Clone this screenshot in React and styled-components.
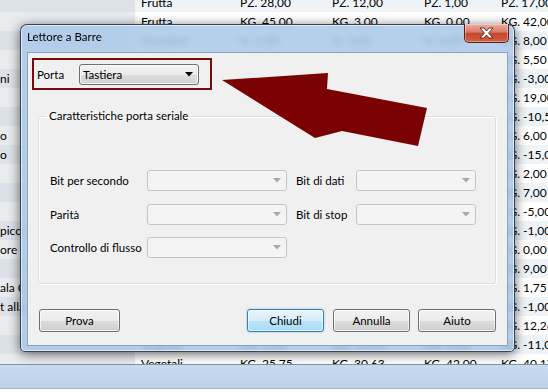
import React from "react";
import styled, { createGlobalStyle } from "styled-components";

const GlobalStyle = createGlobalStyle`
  html, body { margin: 0; padding: 0; }
  body {
    width: 548px;
    height: 392px;
    overflow: hidden;
    background: #ffffff;
    font-family: "Segoe UI", Lato, "Liberation Sans", sans-serif;
    font-size: 12px;
    color: #000;
  }
`;

const sheetRows = [
  { lead: "", cells: ["Frutta", "PZ. 28,00", "PZ. 12,00", "PZ. 1,00", "PZ. 17,00"] },
  { lead: "", cells: ["Frutta", "KG. 45,00", "KG. 3,00", "KG. 0,00", "KG. 42,00"] },
  { lead: "", cells: ["Standard", "N. 5,00", "N. 5,00", "N. 0,00", "KG. 8,00"] },
  { lead: "", cells: ["Frutta", "KG. 8,50", "KG. 3,00", "KG. 0,00", "KG. 5,50"] },
  { lead: "ni", cells: ["Frutta", "KG. 2,00", "KG. 5,00", "KG. 0,00", "KG. -3,00"] },
  { lead: "", cells: ["Verdura", "KG. 24,00", "KG. 5,00", "KG. 0,00", "KG. 19,00"] },
  { lead: "", cells: ["Verdura", "KG. 1,50", "KG. 12,00", "KG. 0,00", "KG. -10,50"] },
  { lead: "o", cells: ["Frutta", "KG. 9,00", "KG. 3,00", "KG. 0,00", "KG. 6,00"] },
  { lead: "o", cells: ["Frutta", "KG. 0,00", "KG. 15,00", "KG. 0,00", "KG. -15,00"] },
  { lead: "", cells: ["Verdura", "KG. 4,00", "KG. 2,00", "KG. 0,00", "KG. 2,00"] },
  { lead: "", cells: ["Verdura", "KG. 10,00", "KG. 3,00", "KG. 0,00", "KG. 7,00"] },
  { lead: "", cells: ["Frutta", "KG. 0,00", "KG. 5,00", "KG. 0,00", "KG. -5,00"] },
  { lead: "pico", cells: ["Frutta", "KG. 2,00", "KG. 3,00", "KG. 0,00", "KG. -1,00"] },
  { lead: "ore", cells: ["Verdura", "KG. 3,00", "KG. 3,00", "KG. 0,00", "KG. 0,00"] },
  { lead: "", cells: ["Verdura", "KG. 12,00", "KG. 3,00", "KG. 0,00", "KG. 9,00"] },
  { lead: "ala C", cells: ["Verdura", "KG. 4,75", "KG. 3,00", "KG. 0,00", "KG. 1,75"] },
  { lead: "t alla", cells: ["Verdura", "KG. 2,00", "KG. 3,00", "KG. 0,00", "KG. -1,00"] },
  { lead: "", cells: ["Vegetali", "KG. 15,26", "KG. 3,00", "KG. 0,00", "KG. 12,26"] },
  { lead: "", cells: ["Vegetali", "KG. 1,00", "KG. 12,00", "KG. 0,00", "KG. -11,00"] },
  { lead: "", cells: ["Vegetali", "KG. 25,75", "KG. 30,63", "KG. 42,00", "KG. 40,17"] },
];

function DropArrow({ disabled }) {
  return (
    <svg width="8" height="5" viewBox="0 0 8 5">
      <polygon points="0,0 8,0 4,4.5" fill={disabled ? "#a8a8a8" : "#000"} />
    </svg>
  );
}

function Combo({ value, width, disabled }) {
  return (
    <ComboBox $width={width} $disabled={disabled}>
      <span>{value}</span>
      <DropArrow disabled={disabled} />
    </ComboBox>
  );
}

export default function App() {
  return (
    <Screen>
      <GlobalStyle />
      <Sheet>
        <SheetRows>
          {sheetRows.map((row, i) => (
            <SheetRow key={i} $alt={i % 2 === 1}>
              <LeadCell $alt={i % 2 === 1}>{row.lead}</LeadCell>
              {row.cells.map((c, j) => (
                <Cell key={j} $last={j === row.cells.length - 1}>{c}</Cell>
              ))}
            </SheetRow>
          ))}
        </SheetRows>
      </Sheet>
      <StatusBar />
      <BottomStrip />

      <Window>
        <TitleBar>
          <Title>Lettore a Barre</Title>
          <CloseButton>
            <svg width="15" height="12" viewBox="0 0 15 12">
              <path
                d="M1 1 H5 L7.5 4 L10 1 H14 L9.6 6 L14 11 H10 L7.5 8 L5 11 H1 L5.4 6 Z"
                fill="#ffffff"
                stroke="#5a2018"
                strokeWidth="0.9"
                strokeLinejoin="round"
              />
            </svg>
          </CloseButton>
        </TitleBar>
        <Client>
          <PortaBox>
            <PortaLabel>Porta</PortaLabel>
            <Combo value="Tastiera" width={120} />
          </PortaBox>

          <Group>
            <Legend>Caratteristiche porta seriale</Legend>
            <FieldGrid>
              <FieldLabel>Bit per secondo</FieldLabel>
              <Combo width={140} disabled />
              <FieldLabel $indent>Bit di dati</FieldLabel>
              <Combo width={120} disabled />
              <FieldLabel>Parità</FieldLabel>
              <Combo width={140} disabled />
              <FieldLabel $indent>Bit di stop</FieldLabel>
              <Combo width={120} disabled />
              <FieldLabel>Controllo di flusso</FieldLabel>
              <Combo width={140} disabled />
            </FieldGrid>
          </Group>

          <ButtonRow>
            <Button $width={81}>Prova</Button>
            <Spacer />
            <Button $width={77} $primary>Chiudi</Button>
            <Button $width={77} $gap={9}>Annulla</Button>
            <Button $width={78} $gap={8}>Aiuto</Button>
          </ButtonRow>
        </Client>
      </Window>

      <ArrowMark width="548" height="392" viewBox="0 0 548 392">
        <polygon
          points="222,80 328,73 327,89 427,108 418,146 342,131 315,138"
          fill="#7a0202"
        />
      </ArrowMark>
    </Screen>
  );
}

const Screen = styled.div`
  position: relative;
  width: 548px;
  height: 392px;
  overflow: hidden;
  display: flex;
  flex-direction: column;
`;

const Sheet = styled.div`
  height: 364px;
  overflow: hidden;
  flex-shrink: 0;
`;

const SheetRows = styled.div`
  margin-top: -7px;
  display: flex;
  flex-direction: column;
`;

const SheetRow = styled.div`
  display: grid;
  grid-template-columns: 135px 99px 92px 92px 81px 1fr;
  height: 19px;
  line-height: 19px;
  background: ${(p) => (p.$alt ? "#ffffff" : "#eef3f8")};
  white-space: nowrap;
`;

const LeadCell = styled.span`
  background: ${(p) => (p.$alt ? "#e9ecef" : "#dde2e8")};
  overflow: hidden;
`;

const Cell = styled.span`
  padding-left: ${(p) => (p.$last ? "2px" : "6px")};
  overflow: hidden;
`;

const StatusBar = styled.div`
  height: 23px;
  border-top: 1px solid #8193a8;
  background: linear-gradient(180deg, #c9dbef 0%, #bcd1e9 100%);
  flex-shrink: 0;
`;

const BottomStrip = styled.div`
  flex: 1;
  border-top: 1px solid #a5b6c8;
  background: #ffffff;
`;

const Window = styled.div`
  position: absolute;
  left: 20px;
  top: 24px;
  width: 495px;
  height: 328px;
  box-sizing: border-box;
  display: flex;
  flex-direction: column;
  padding: 0 6px 5px;
  border: 1px solid rgba(25, 35, 50, 0.8);
  border-radius: 7px 7px 5px 5px;
  background: linear-gradient(180deg, rgba(172, 202, 233, 0.86) 0%, rgba(166, 198, 231, 0.82) 100%);
  backdrop-filter: blur(3px);
  box-shadow: 0 2px 12px rgba(0, 0, 0, 0.6), inset 0 0 0 1px rgba(255, 255, 255, 0.55);
  font-size: 11.5px;
`;

const TitleBar = styled.div`
  height: 27px;
  display: flex;
  justify-content: space-between;
  align-items: flex-start;
  flex-shrink: 0;
`;

const Title = styled.span`
  padding-top: 4px;
  line-height: 16px;
  font-size: 11.5px;
  color: #000;
`;

const CloseButton = styled.div`
  margin-top: -1px;
  margin-right: -1px;
  width: 45px;
  height: 19px;
  box-sizing: border-box;
  display: flex;
  align-items: center;
  justify-content: center;
  border: 1px solid #5c1e16;
  border-top: none;
  border-radius: 0 0 5px 5px;
  background: linear-gradient(180deg, #eab0a3 0%, #dc7a68 45%, #c4462f 52%, #d2613f 100%);
  box-shadow: inset 0 0 0 1px rgba(255, 255, 255, 0.35);
`;

const Client = styled.div`
  flex: 1;
  display: flex;
  flex-direction: column;
  background: #f0f0f0;
  border: 1px solid #8aa2bb;
`;

const PortaBox = styled.div`
  margin: 5px 0 0 4px;
  width: 180px;
  height: 32px;
  box-sizing: border-box;
  border: 2px solid #740c0c;
  display: flex;
  align-items: center;
  padding-left: 3px;
`;

const PortaLabel = styled.span`
  width: 42px;
`;

const ComboBox = styled.div`
  width: ${(p) => p.$width}px;
  height: 21px;
  box-sizing: border-box;
  display: flex;
  align-items: center;
  justify-content: space-between;
  padding: 0 5px 0 3px;
  border: 1px solid ${(p) => (p.$disabled ? "#c2c5c8" : "#707070")};
  border-radius: 3px;
  background: ${(p) =>
    p.$disabled
      ? "#f4f4f4"
      : "linear-gradient(180deg, #f3f3f3 0%, #ebebeb 50%, #dddddd 51%, #d2d2d2 100%)"};
  box-shadow: ${(p) => (p.$disabled ? "none" : "inset 0 0 0 1px rgba(255,255,255,0.7)")};
  color: #000;
`;

const Group = styled.fieldset`
  margin: 18px 11px 0 10px;
  padding: 0;
  height: 176px;
  box-sizing: border-box;
  min-width: 0;
  border: 1px solid #d5dfe5;
  border-radius: 3px;
  box-shadow: 1px 1px 0 #ffffff, inset 1px 1px 0 #ffffff;
`;

const Legend = styled.legend`
  margin-left: 7px;
  padding: 0 3px;
  line-height: 16px;
`;

const FieldGrid = styled.div`
  display: grid;
  grid-template-columns: 97px 140px 69px 120px;
  grid-template-rows: 21px 21px 21px;
  row-gap: 12.5px;
  align-items: center;
  padding: 46px 0 0 11px;
`;

const FieldLabel = styled.span`
  padding-left: ${(p) => (p.$indent ? "9px" : "0")};
  white-space: nowrap;
`;

const ButtonRow = styled.div`
  margin-top: 25px;
  padding: 0 11px;
  display: flex;
`;

const Spacer = styled.div`
  flex: 1;
`;

const Button = styled.div`
  width: ${(p) => p.$width}px;
  height: 23px;
  margin-left: ${(p) => (p.$gap ? `${p.$gap}px` : "0")};
  box-sizing: border-box;
  display: flex;
  align-items: center;
  justify-content: center;
  border: 1px solid ${(p) => (p.$primary ? "#3c7fb1" : "#707070")};
  border-radius: 3px;
  background: ${(p) =>
    p.$primary
      ? "linear-gradient(180deg, #e8f5fc 0%, #d6eefb 50%, #bce4f9 51%, #a9dbf6 100%)"
      : "linear-gradient(180deg, #f2f2f2 0%, #ebebeb 50%, #dddddd 51%, #cfcfcf 100%)"};
  box-shadow: ${(p) =>
    p.$primary
      ? "inset 0 0 0 1px rgba(255,255,255,0.6), 0 0 2px rgba(60,160,220,0.7)"
      : "inset 0 0 0 1px rgba(255,255,255,0.7)"};
`;

const ArrowMark = styled.svg`
  position: absolute;
  left: 0;
  top: 0;
  pointer-events: none;
`;
